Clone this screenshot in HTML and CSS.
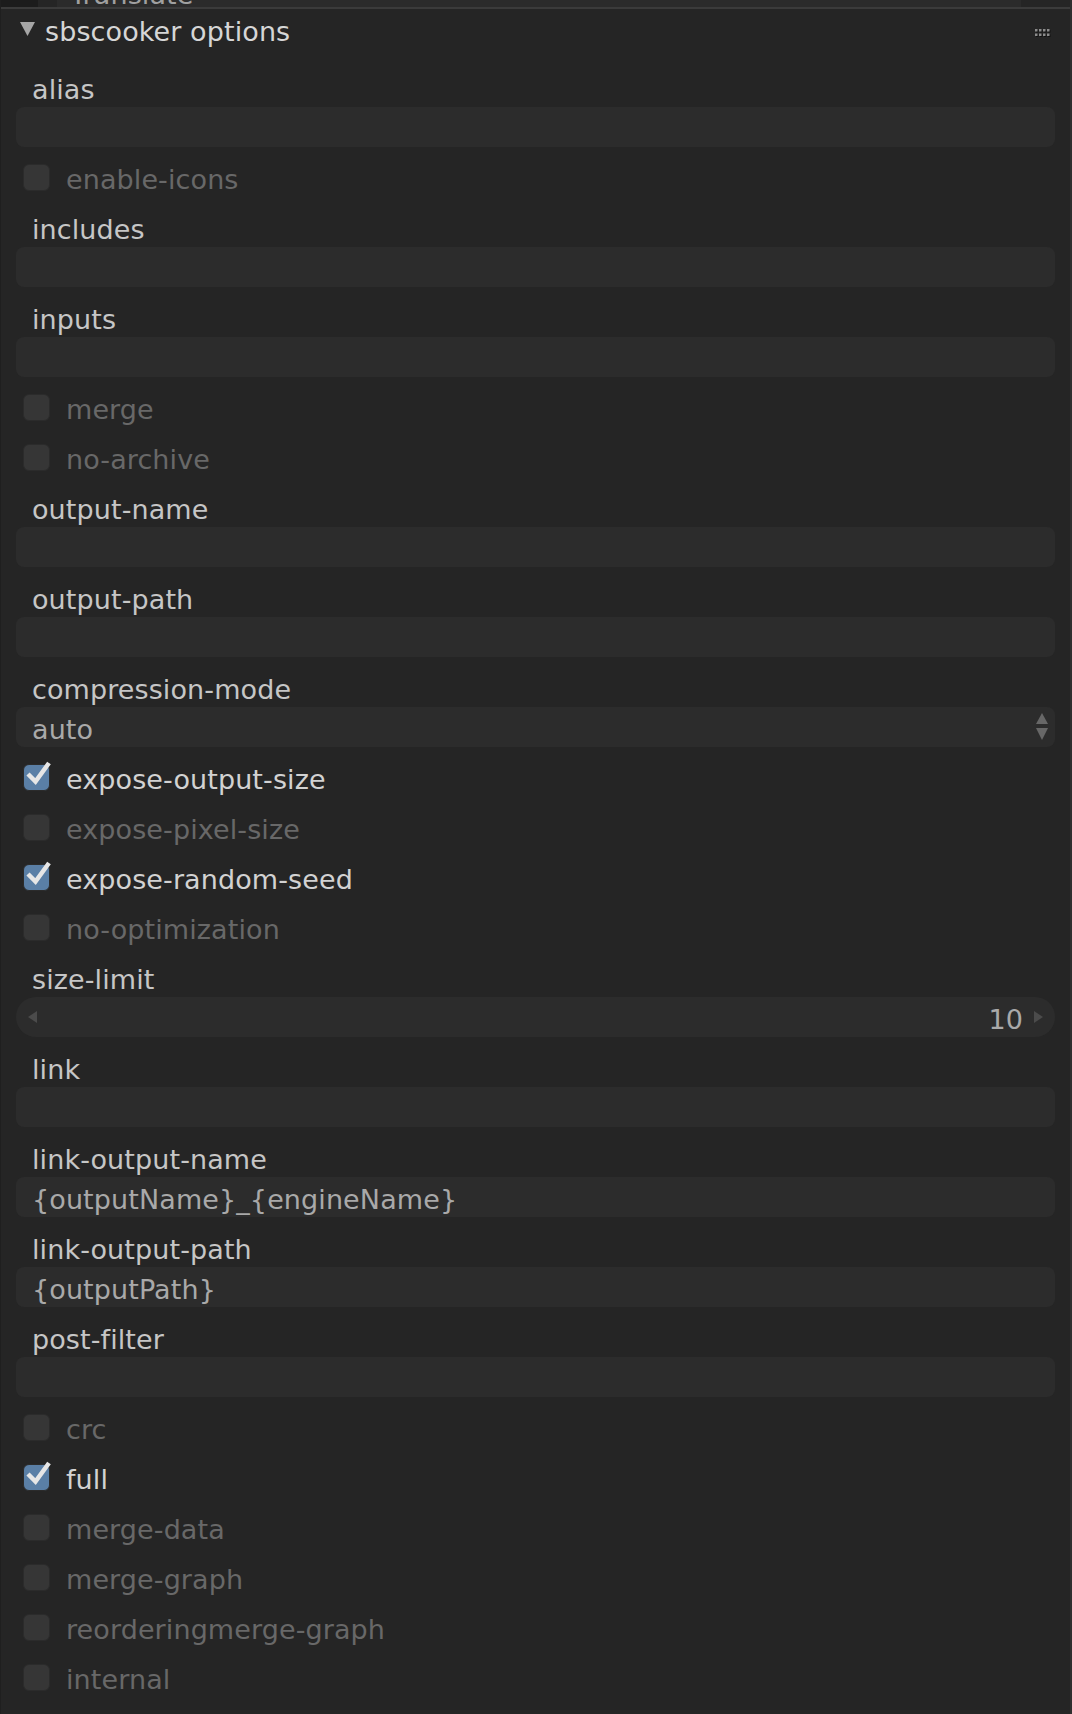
FILE: index.html
```html
<!DOCTYPE html>
<html>
<head>
<meta charset="utf-8">
<title>sbscooker options</title>
<link rel="stylesheet" href="styles.css">
</head>
<body>
<div class="app">
  <div class="top-strip">
    <div class="ts-dark"></div>
    <div class="ts-field"><span class="ts-text">Translate</span></div>
  </div>
  <div class="panel">
    <div class="panel-header">
      <svg class="disclosure" width="15" height="14" viewBox="0 0 15 14"><polygon points="0,0 15,0 7.5,14"/></svg>
      <span class="panel-title">sbscooker options</span>
      <svg class="grip" width="16" height="9" viewBox="0 0 16 9">
        <g class="grip-shadow">
          <rect x="1" y="1" width="2.5" height="2.5"/><rect x="5" y="1" width="2.5" height="2.5"/><rect x="9" y="1" width="2.5" height="2.5"/><rect x="13" y="1" width="2.5" height="2.5"/>
          <rect x="1" y="5.5" width="2.5" height="2.5"/><rect x="5" y="5.5" width="2.5" height="2.5"/><rect x="9" y="5.5" width="2.5" height="2.5"/><rect x="13" y="5.5" width="2.5" height="2.5"/>
        </g>
        <g class="grip-dots">
          <rect x="0" y="0" width="2.5" height="2.5"/><rect x="4" y="0" width="2.5" height="2.5"/><rect x="8" y="0" width="2.5" height="2.5"/><rect x="12" y="0" width="2.5" height="2.5"/>
          <rect x="0" y="4.5" width="2.5" height="2.5"/><rect x="4" y="4.5" width="2.5" height="2.5"/><rect x="8" y="4.5" width="2.5" height="2.5"/><rect x="12" y="4.5" width="2.5" height="2.5"/>
        </g>
      </svg>
    </div>
    <div class="panel-body">
      <div class="label">alias</div>
      <div class="field"></div>
      <div class="check"><span class="box"></span><span class="check-text">enable-icons</span></div>
      <div class="label">includes</div>
      <div class="field"></div>
      <div class="label">inputs</div>
      <div class="field"></div>
      <div class="check"><span class="box"></span><span class="check-text">merge</span></div>
      <div class="check"><span class="box"></span><span class="check-text">no-archive</span></div>
      <div class="label">output-name</div>
      <div class="field"></div>
      <div class="label">output-path</div>
      <div class="field"></div>
      <div class="label">compression-mode</div>
      <div class="field select">
        <span class="value">auto</span>
        <svg class="updown" width="12" height="28" viewBox="0 0 12 28"><polygon points="6,0 12,11 0,11"/><polygon points="0,15 12,15 6,27"/></svg>
      </div>
      <div class="check on"><span class="box"><svg class="tick" width="27" height="27" viewBox="0 0 27 27"><polyline points="5,10 12.5,17.5 26,-1"/></svg></span><span class="check-text">expose-output-size</span></div>
      <div class="check"><span class="box"></span><span class="check-text">expose-pixel-size</span></div>
      <div class="check on"><span class="box"><svg class="tick" width="27" height="27" viewBox="0 0 27 27"><polyline points="5,10 12.5,17.5 26,-1"/></svg></span><span class="check-text">expose-random-seed</span></div>
      <div class="check"><span class="box"></span><span class="check-text">no-optimization</span></div>
      <div class="label">size-limit</div>
      <div class="field slider">
        <svg class="arrow-l" width="9" height="12" viewBox="0 0 9 12"><polygon points="9,0 9,12 0,6"/></svg>
        <span class="num">10</span>
        <svg class="arrow-r" width="9" height="12" viewBox="0 0 9 12"><polygon points="0,0 9,6 0,12"/></svg>
      </div>
      <div class="label">link</div>
      <div class="field"></div>
      <div class="label">link-output-name</div>
      <div class="field"><span class="value">{outputName}_{engineName}</span></div>
      <div class="label">link-output-path</div>
      <div class="field"><span class="value">{outputPath}</span></div>
      <div class="label">post-filter</div>
      <div class="field"></div>
      <div class="check"><span class="box"></span><span class="check-text">crc</span></div>
      <div class="check on"><span class="box"><svg class="tick" width="27" height="27" viewBox="0 0 27 27"><polyline points="5,10 12.5,17.5 26,-1"/></svg></span><span class="check-text">full</span></div>
      <div class="check"><span class="box"></span><span class="check-text">merge-data</span></div>
      <div class="check"><span class="box"></span><span class="check-text">merge-graph</span></div>
      <div class="check"><span class="box"></span><span class="check-text">reorderingmerge-graph</span></div>
      <div class="check"><span class="box"></span><span class="check-text">internal</span></div>
    </div>
  </div>
</div>
</body>
</html>
```
FILE: styles.css
```css
html, body {
  margin: 0;
  padding: 0;
  background: #252525;
}
body {
  font-family: "DejaVu Sans", "Noto Sans", sans-serif;
  font-size: 27px;
  letter-spacing: 0.1px;
  color: #c6c6c6;
}
.app {
  width: 1069px;
  min-height: 1714px;
  border-left: 1px solid #1f1f1f;
  border-right: 2px solid #2f2f2f;
  display: flex;
  flex-direction: column;
}
.top-strip {
  height: 7px;
  display: flex;
  overflow: hidden;
  border-bottom: 2px solid #3b3b3b;
}
.ts-dark {
  width: 37px;
  background: #1c1c1c;
}
.ts-field {
  margin-left: 19px;
  width: 964px;
  background: #2b2b2b;
  padding-left: 13px;
  box-sizing: border-box;
}
.ts-text {
  display: block;
  margin-top: -22px;
  line-height: 34px;
  color: #a0a0a0;
}
.panel {
  padding: 0 15px;
  display: flex;
  flex-direction: column;
}
.panel-header {
  height: 58px;
  display: flex;
  align-items: flex-start;
}
.disclosure {
  margin: 13px 0 0 4px;
  fill: #a6a6a6;
}
.panel-title {
  margin-left: 10px;
  padding-top: 6px;
  line-height: 34px;
  color: #d6d6d6;
}
.grip {
  margin: 20px 4px 0 auto;
}
.grip-shadow rect { fill: #121212; }
.grip-dots rect { fill: #8c8c8c; }
.panel-body {
  display: flex;
  flex-direction: column;
}
.label {
  height: 40px;
  box-sizing: border-box;
  padding: 6px 0 0 16px;
  line-height: 34px;
  color: #c6c6c6;
  white-space: nowrap;
}
.field {
  height: 40px;
  margin-bottom: 10px;
  box-sizing: border-box;
  border-radius: 8px;
  background: #2c2c2c;
  padding: 6px 17px 0 16px;
  line-height: 34px;
  color: #a9a9a9;
  display: flex;
  align-items: flex-start;
  white-space: nowrap;
}
.select .updown {
  margin: 0 -10px 0 auto;
  fill: #676767;
}
.slider {
  border-radius: 20px;
  padding: 6px 12px 0 12px;
}
.slider .arrow-l {
  margin-top: 8px;
  fill: #4b4b4b;
}
.slider .num {
  margin-left: auto;
  margin-right: 11px;
  color: #a9a9a9;
}
.slider .arrow-r {
  margin-top: 8px;
  fill: #4b4b4b;
}
.check {
  height: 40px;
  margin-bottom: 10px;
  display: flex;
  align-items: flex-start;
  white-space: nowrap;
}
.box {
  position: relative;
  width: 27px;
  height: 27px;
  box-sizing: border-box;
  margin: 7px 0 0 7px;
  border-radius: 6px;
  background: #363636;
  border: 1.5px solid #2b2b2b;
  flex: none;
}
.check.on .box {
  background: #5a7fa6;
}
.tick {
  position: absolute;
  left: -1.5px;
  top: -1.5px;
  overflow: visible;
}
.tick polyline {
  fill: none;
  stroke: #e6e6e6;
  stroke-width: 4.5;
  stroke-linejoin: miter;
}
.check-text {
  margin-left: 16px;
  padding-top: 6px;
  line-height: 34px;
  color: #686868;
}
.check.on .check-text {
  color: #d2d2d2;
}
```
